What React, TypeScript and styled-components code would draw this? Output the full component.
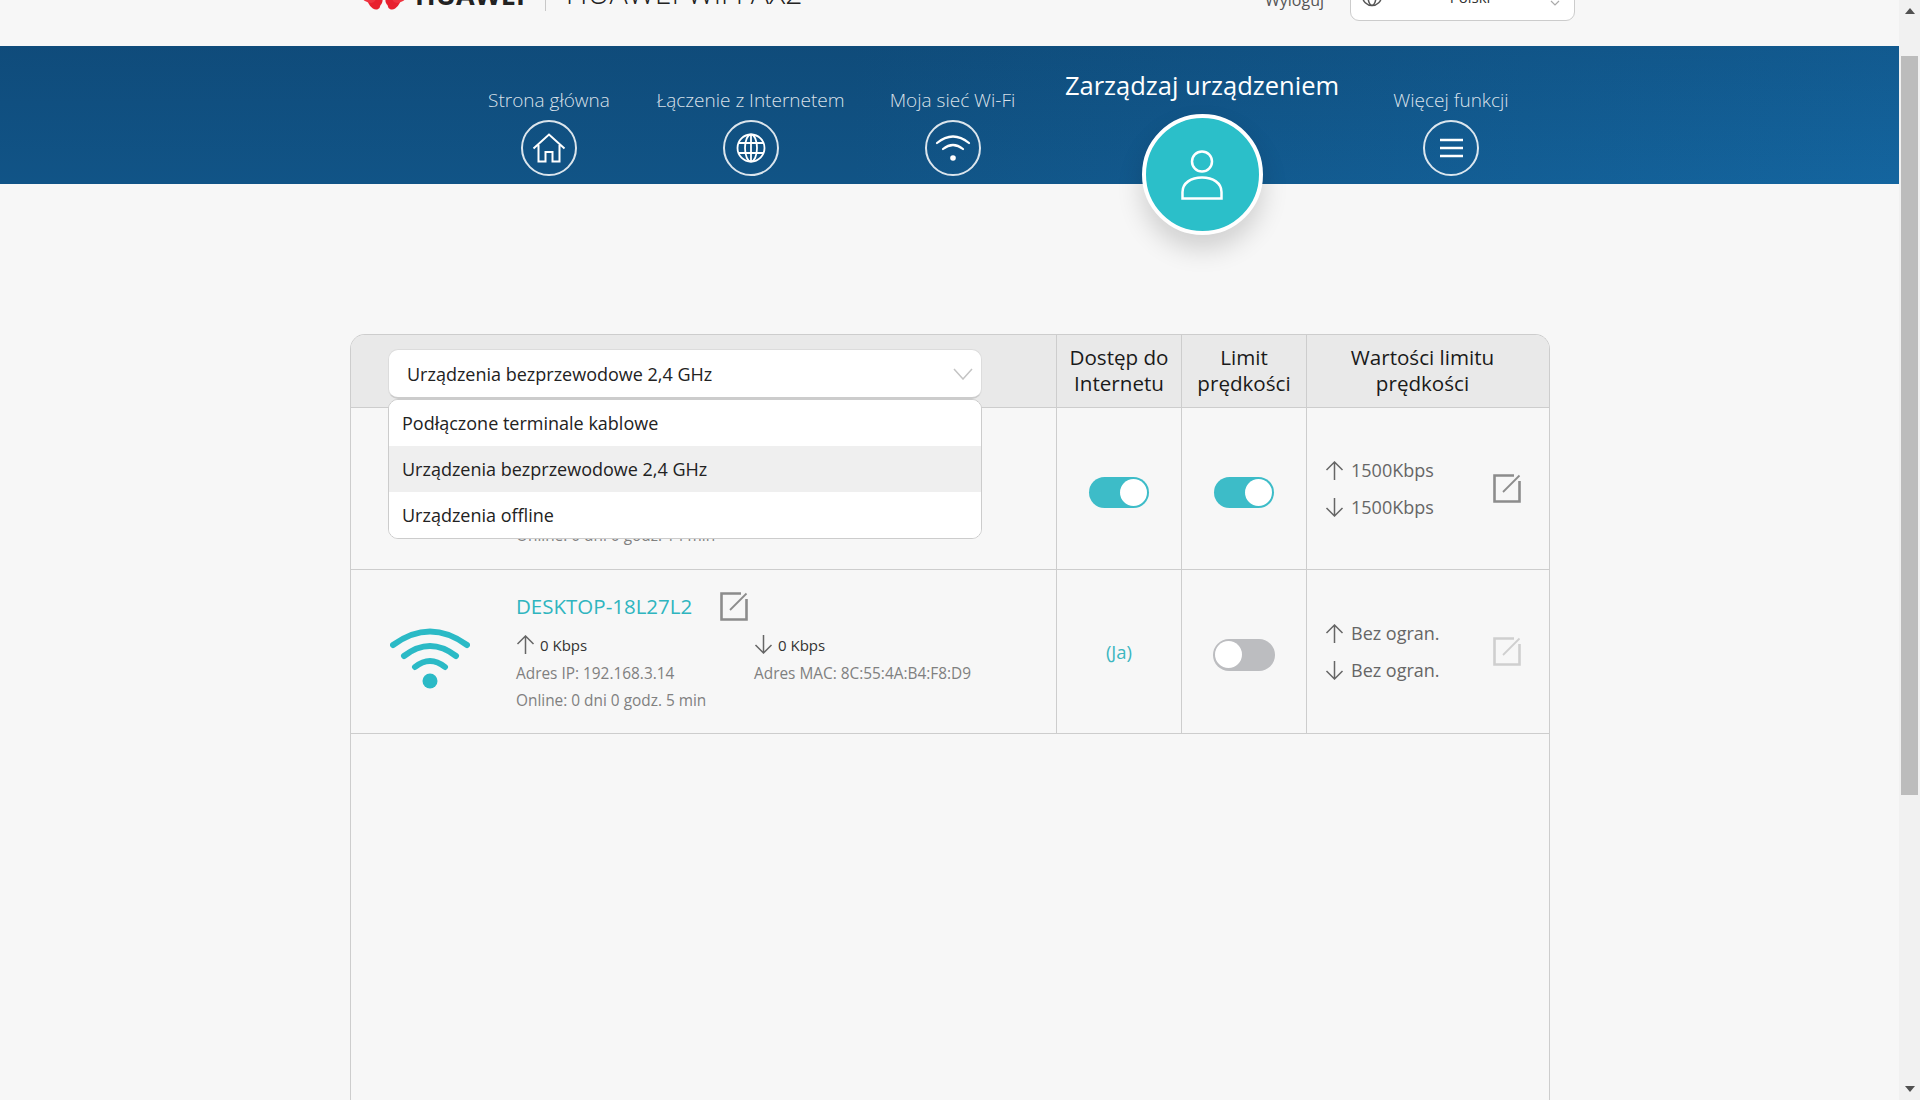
import React from "react";
import styled, { createGlobalStyle } from "styled-components";

const Global = createGlobalStyle`
  html, body { margin: 0; padding: 0; height: 100%; overflow: hidden; background: #f7f7f7; }
  body { font-family: "Open Sans", "Liberation Sans", sans-serif; color: #222; }
  #root { height: 1100px; }
`;

const Page = styled.div`
  display: flex;
  height: 1100px;
  overflow: hidden;
  background: #f7f7f7;
`;
const Main = styled.div`
  flex: 1;
  min-width: 0;
  display: flex;
  flex-direction: column;
`;
const TopBar = styled.header`
  height: 46px;
  flex: none;
  overflow: hidden;
  display: flex;
  align-items: flex-end;
  padding: 0 324px 0 362px;
  box-sizing: border-box;
`;
const LogoMark = styled.svg`
  width: 44px;
  height: 40px;
  margin-bottom: 36px;
  flex: none;
`;
const LogoWord = styled.span`
  font: 700 27px/30px "Open Sans", sans-serif;
  color: #222;
  margin: 0 0 36px 9px;
`;
const BrandDivider = styled.span`
  width: 1px;
  height: 40px;
  background: #c8c8c8;
  margin: 0 20px 35px 20px;
`;
const Model = styled.span`
  font: 300 30.3px/36px "Open Sans", sans-serif;
  color: #222;
  margin-bottom: 35px;
  white-space: nowrap;
`;
const Logout = styled.span`
  margin: 0 26px 36px auto;
  font: 400 16px/20px "Open Sans", sans-serif;
  color: #555;
`;
const LangBox = styled.div`
  width: 225px;
  height: 50px;
  margin-bottom: 25px;
  box-sizing: border-box;
  display: flex;
  align-items: flex-end;
  justify-content: space-between;
  padding: 0 14px 13px 10px;
  background: #fff;
  border: 1px solid #ccc;
  border-radius: 0 0 9px 9px;
  font: 400 15px/20px "Open Sans", sans-serif;
  color: #333;
`;
const LangLabel = styled.span`
  margin-left: 7px;
`;

const Banner = styled.nav`
  height: 138px;
  flex: none;
  box-sizing: border-box;
  padding-left: 448px;
  display: grid;
  grid-template-columns: 202px 201px 203px 296px 202px;
  background:
    linear-gradient(to bottom, rgba(4, 24, 50, 0.14), rgba(4, 24, 50, 0)),
    linear-gradient(90deg, #115487 0%, #115486 45%, #14659f 100%);
`;
const NavItem = styled.div<{ $active?: boolean }>`
  display: flex;
  flex-direction: column;
  align-items: center;
  padding-top: ${(p) => (p.$active ? "21px" : "40px")};
  position: relative;
  z-index: 2;
`;
const NavLabel = styled.span<{ $active?: boolean }>`
  font-family: "Open Sans", sans-serif;
  font-weight: ${(p) => (p.$active ? 400 : 300)};
  font-size: ${(p) => (p.$active ? "25.5px" : "19px")};
  line-height: ${(p) => (p.$active ? "36px" : "28px")};
  color: ${(p) => (p.$active ? "#fff" : "rgba(255,255,255,.85)")};
  white-space: nowrap;
`;
const NavCircle = styled.span`
  width: 56px;
  height: 56px;
  margin-top: 6px;
  box-sizing: border-box;
  border: 2px solid rgba(255, 255, 255, 0.85);
  border-radius: 50%;
  display: flex;
  align-items: center;
  justify-content: center;
`;
const ActiveCircle = styled.span`
  width: 121px;
  height: 121px;
  margin-top: 11px;
  flex: none;
  box-sizing: border-box;
  border: 4px solid #fff;
  border-radius: 50%;
  background: #2bbfc9;
  display: flex;
  align-items: center;
  justify-content: center;
  box-shadow: 0 14px 26px rgba(0, 0, 0, 0.16);
`;

const Content = styled.main`
  flex: 1;
  min-height: 0;
  padding: 150px 0 0 350px;
  display: flex;
`;
const Table = styled.section`
  width: 1200px;
  box-sizing: border-box;
  border: 1px solid #cdcdcd;
  border-bottom: 0;
  border-radius: 15px 15px 0 0;
  margin-bottom: -40px;
`;
const Columns = styled.div<{ $height: number; $head?: boolean }>`
  display: grid;
  grid-template-columns: 705px 125px 125px 1fr;
  height: ${(p) => p.$height}px;
  box-sizing: border-box;
  border-bottom: 1px solid #cdcdcd;
  background: ${(p) => (p.$head ? "#e9e9e9" : "transparent")};
  border-radius: ${(p) => (p.$head ? "14px 14px 0 0" : "0")};
`;
const Cell = styled.div`
  border-left: 1px solid #cdcdcd;
  display: flex;
  align-items: center;
  justify-content: center;
  min-width: 0;
`;
const HeadCell = styled(Cell)<{ $inset?: boolean }>`
  font: 400 20.6px/26px "Open Sans", sans-serif;
  color: #1a1a1a;
  text-align: center;
  padding: 0 ${(p) => (p.$inset ? "11px" : "0")} 2px 0;
  box-sizing: border-box;
  white-space: nowrap;
`;
const SelectCell = styled.div`
  position: relative;
  padding: 14px 0 0 37px;
`;
const SelectBox = styled.div`
  width: 594px;
  height: 50px;
  box-sizing: border-box;
  background: #fff;
  border: 1px solid #dcdcdc;
  border-bottom: 2px solid #ccc;
  border-radius: 10px;
  display: flex;
  align-items: center;
  justify-content: space-between;
  padding: 0 8px 0 18px;
  font: 400 18px/24px "Open Sans", sans-serif;
  color: #222;
`;
const Menu = styled.ul`
  position: absolute;
  left: 37px;
  top: 64px;
  z-index: 5;
  width: 594px;
  box-sizing: border-box;
  margin: 0;
  padding: 0;
  list-style: none;
  background: #fff;
  border: 1px solid #ccc;
  border-radius: 10px;
  overflow: hidden;
`;
const MenuItem = styled.li<{ $current?: boolean }>`
  height: 46px;
  display: flex;
  align-items: center;
  padding-left: 13px;
  background: ${(p) => (p.$current ? "#efefef" : "#fff")};
  font: 400 18px/24px "Open Sans", sans-serif;
  color: #222;
`;

const DeviceCell = styled.div`
  display: flex;
  min-width: 0;
`;
const WifiSlot = styled.div`
  width: 157px;
  margin-right: 8px;
  flex: none;
  display: flex;
  justify-content: center;
  padding: 58px 0 0 0;
  box-sizing: border-box;
`;
const HiddenInfo = styled.div`
  padding: 115px 0 0 165px;
`;
const Info = styled.div`
  display: flex;
  flex-direction: column;
  padding-top: 21px;
`;
const NameRow = styled.div`
  display: flex;
  align-items: center;
  height: 30px;
  gap: 28px;
`;
const DeviceName = styled.span`
  font: 400 20.5px/30px "Open Sans", sans-serif;
  color: #2fb5bf;
`;
const SpeedRow = styled.div`
  display: grid;
  grid-template-columns: 238px 1fr;
  margin-top: 8px;
  height: 31px;
  align-items: center;
`;
const Speed = styled.span`
  display: flex;
  align-items: center;
  gap: 5px;
  font: 400 15px/20px "Open Sans", sans-serif;
  color: #333;
`;
const Detail = styled.span`
  font: 400 15.4px/26px "Open Sans", sans-serif;
  color: #808080;
  white-space: nowrap;
`;
const DetailRow = styled.div`
  display: grid;
  grid-template-columns: 238px 1fr;
  height: 27px;
  align-items: center;
`;
const SelfTag = styled.span`
  font: 400 18.5px/24px "Open Sans", sans-serif;
  color: #3cb6c0;
`;
const Toggle = styled.span<{ $on?: boolean }>`
  width: ${(p) => (p.$on ? "60px" : "62px")};
  height: ${(p) => (p.$on ? "31px" : "32px")};
  border-radius: 16px;
  box-sizing: border-box;
  padding: 2px;
  display: flex;
  justify-content: ${(p) => (p.$on ? "flex-end" : "flex-start")};
  background: ${(p) => (p.$on ? "#3dbcc8" : "#bcbdc0")};
  position: relative;
  top: ${(p) => (p.$on ? "4px" : "3px")};
`;
const Knob = styled.span`
  width: 27px;
  height: 27px;
  border-radius: 50%;
  background: #fff;
`;
const LimitCell = styled(Cell)`
  justify-content: space-between;
  padding: 0 28px 0 18px;
  box-sizing: border-box;
`;
const LimitList = styled.div`
  display: flex;
  flex-direction: column;
  gap: 11px;
`;
const LimitLine = styled.span`
  display: flex;
  align-items: center;
  gap: 7px;
  height: 26px;
  font: 400 18px/26px "Open Sans", sans-serif;
  color: #666;
`;
const EditSlot = styled.span`
  display: flex;
`;

const ScrollBar = styled.aside`
  width: 21px;
  flex: none;
  height: 1100px;
  background: #f1f1f1;
  display: flex;
  flex-direction: column;
  align-items: center;
  position: relative;
`;
const ArrowUp = styled.span`
  margin-top: 8px;
  width: 0;
  height: 0;
  border-left: 5px solid transparent;
  border-right: 5px solid transparent;
  border-bottom: 6px solid #505050;
`;
const Thumb = styled.span`
  margin-top: 42px;
  width: 17px;
  height: 739px;
  background: #bcbcbc;
`;
const ArrowDown = styled.span`
  margin-top: auto;
  margin-bottom: 8px;
  width: 0;
  height: 0;
  border-left: 5px solid transparent;
  border-right: 5px solid transparent;
  border-top: 6px solid #505050;
`;

const Line = styled.svg`
  flex: none;
  display: block;
`;

const UpArrow = () => (
  <Line width="19" height="19" viewBox="0 0 19 19" fill="none" stroke="#666" strokeWidth="1.5">
    <path d="M9.500 19V1M1.500 9 9.500 1l8 8" />
  </Line>
);
const DownArrow = () => (
  <Line width="19" height="19" viewBox="0 0 19 19" fill="none" stroke="#666" strokeWidth="1.5">
    <path d="M9.500 0v18M1.500 10l8 8 8-8" />
  </Line>
);
const EditIcon = ({ muted }: { muted?: boolean }) => (
  <Line width="28" height="29" viewBox="0 0 28 29" fill="none" stroke={muted ? "#cfcfcf" : "#8c8c8c"}>
    <path d="M21 1.500H1.500v26h25V7" strokeWidth="2.600" />
    <path d="M26.500 1.500 10 18" strokeWidth="1.800" />
  </Line>
);
const Chevron = () => (
  <Line width="20" height="12" viewBox="0 0 20 12" fill="none" stroke="#c4c4c4" strokeWidth="1.500">
    <path d="M1 1l9 10 9-10" />
  </Line>
);
const WifiBig = () => (
  <Line width="80" height="62" viewBox="0 0 80 62" fill="none" stroke="#2bbac6" strokeWidth="6" strokeLinecap="round">
    <path d="M3 17Q40-10 77 17" />
    <path d="M14 28Q40 8 66 28" />
    <path d="M25 39Q40 27 55 39" />
    <circle cx="40" cy="53" r="7.500" fill="#2bbac6" stroke="none" />
  </Line>
);

const items = ["Podłączone terminale kablowe", "Urządzenia bezprzewodowe 2,4 GHz", "Urządzenia offline"];

export default function App() {
  return (
    <Page>
      <Global />
      <Main>
        <TopBar>
          <LogoMark viewBox="0 0 44 40">
            <g fill="#e8202f">
              <ellipse cx="12" cy="31" rx="6" ry="9" transform="rotate(-25 12 31)" />
              <ellipse cx="32" cy="31" rx="6" ry="9" transform="rotate(25 32 31)" />
              <ellipse cx="6" cy="27" rx="5" ry="8" transform="rotate(-60 6 27)" fill="#ef3340" />
              <ellipse cx="38" cy="27" rx="5" ry="8" transform="rotate(60 38 27)" fill="#ef3340" />
              <ellipse cx="17" cy="27" rx="3.500" ry="8" transform="rotate(-8 17 27)" />
              <ellipse cx="27" cy="27" rx="3.500" ry="8" transform="rotate(8 27 27)" />
            </g>
          </LogoMark>
          <LogoWord>HUAWEI</LogoWord>
          <BrandDivider />
          <Model>HUAWEI WiFi AX2</Model>
          <Logout>Wyloguj</Logout>
          <LangBox>
            <Line width="22" height="22" viewBox="0 0 22 22" fill="none" stroke="#555" strokeWidth="1.500">
              <circle cx="11" cy="11" r="9.500" />
              <ellipse cx="11" cy="11" rx="4" ry="9.500" />
            </Line>
            <LangLabel>Polski</LangLabel>
            <Line width="10" height="7" viewBox="0 0 10 7" fill="none" stroke="#aaa" strokeWidth="1.200">
              <path d="M1 1l4 4 4-4" />
            </Line>
          </LangBox>
        </TopBar>

        <Banner>
          <NavItem>
            <NavLabel>Strona główna</NavLabel>
            <NavCircle>
              <Line width="34" height="30" viewBox="0 0 34 30" fill="none" stroke="#fff" strokeWidth="2">
                <path d="M1.500 15.500 17 1.500l15.500 14M6.500 12v16.500h7V19h7v9.500h7V12" />
              </Line>
            </NavCircle>
          </NavItem>
          <NavItem>
            <NavLabel>Łączenie z Internetem</NavLabel>
            <NavCircle>
              <Line width="30" height="30" viewBox="0 0 30 30" fill="none" stroke="#fff" strokeWidth="1.800">
                <circle cx="15" cy="15" r="13.500" />
                <ellipse cx="15" cy="15" rx="6" ry="13.500" />
                <path d="M15 1.500v27M2.500 10h25M2.500 20h25" />
              </Line>
            </NavCircle>
          </NavItem>
          <NavItem>
            <NavLabel>Moja sieć Wi-Fi</NavLabel>
            <NavCircle>
              <Line width="36" height="28" viewBox="0 0 36 28" fill="none" stroke="#fff" strokeWidth="2.200" strokeLinecap="round">
                <path d="M2 9Q18-4 34 9" />
                <path d="M8 15Q18 7 28 15" />
                <circle cx="18" cy="24" r="2.800" fill="#fff" stroke="none" />
              </Line>
            </NavCircle>
          </NavItem>
          <NavItem $active>
            <NavLabel $active>Zarządzaj urządzeniem</NavLabel>
            <ActiveCircle>
              <Line width="42" height="50" viewBox="0 0 42 50" fill="none" stroke="#fff" strokeWidth="2.500">
                <circle cx="21" cy="11.500" r="10" />
                <path d="M1.500 48.500V42C1.500 33 10 27.500 21 27.500S40.500 33 40.500 42v6.500Z" />
              </Line>
            </ActiveCircle>
          </NavItem>
          <NavItem>
            <NavLabel>Więcej funkcji</NavLabel>
            <NavCircle>
              <Line width="23" height="20" viewBox="0 0 23 20" fill="none" stroke="#fff" strokeWidth="2.500">
                <path d="M0 2h23M0 10h23M0 18h23" />
              </Line>
            </NavCircle>
          </NavItem>
        </Banner>

        <Content>
          <Table>
            <Columns $height={73} $head>
              <SelectCell>
                <SelectBox>
                  Urządzenia bezprzewodowe 2,4 GHz
                  <Chevron />
                </SelectBox>
                <Menu>
                  {items.map((t, i) => (
                    <MenuItem key={t} $current={i === 1}>{t}</MenuItem>
                  ))}
                </Menu>
              </SelectCell>
              <HeadCell>Dostęp do<br />Internetu</HeadCell>
              <HeadCell>Limit<br />prędkości</HeadCell>
              <HeadCell $inset>Wartości limitu<br />prędkości</HeadCell>
            </Columns>

            <Columns $height={162}>
              <HiddenInfo>
                <Detail>Online: 0 dni 0 godz. 14 min</Detail>
              </HiddenInfo>
              <Cell><Toggle $on><Knob /></Toggle></Cell>
              <Cell><Toggle $on><Knob /></Toggle></Cell>
              <LimitCell>
                <LimitList>
                  <LimitLine><UpArrow />1500Kbps</LimitLine>
                  <LimitLine><DownArrow />1500Kbps</LimitLine>
                </LimitList>
                <EditSlot><EditIcon /></EditSlot>
              </LimitCell>
            </Columns>

            <Columns $height={164}>
              <DeviceCell>
                <WifiSlot><WifiBig /></WifiSlot>
                <Info>
                  <NameRow>
                    <DeviceName>DESKTOP-18L27L2</DeviceName>
                    <EditIcon />
                  </NameRow>
                  <SpeedRow>
                    <Speed><UpArrow />0 Kbps</Speed>
                    <Speed><DownArrow />0 Kbps</Speed>
                  </SpeedRow>
                  <DetailRow>
                    <Detail>Adres IP: 192.168.3.14</Detail>
                    <Detail>Adres MAC: 8C:55:4A:B4:F8:D9</Detail>
                  </DetailRow>
                  <DetailRow>
                    <Detail>Online: 0 dni 0 godz. 5 min</Detail>
                  </DetailRow>
                </Info>
              </DeviceCell>
              <Cell><SelfTag>(Ja)</SelfTag></Cell>
              <Cell><Toggle><Knob /></Toggle></Cell>
              <LimitCell>
                <LimitList>
                  <LimitLine><UpArrow />Bez ogran.</LimitLine>
                  <LimitLine><DownArrow />Bez ogran.</LimitLine>
                </LimitList>
                <EditSlot><EditIcon muted /></EditSlot>
              </LimitCell>
            </Columns>
          </Table>
        </Content>
      </Main>
      <ScrollBar>
        <ArrowUp />
        <Thumb />
        <ArrowDown />
      </ScrollBar>
    </Page>
  );
}
